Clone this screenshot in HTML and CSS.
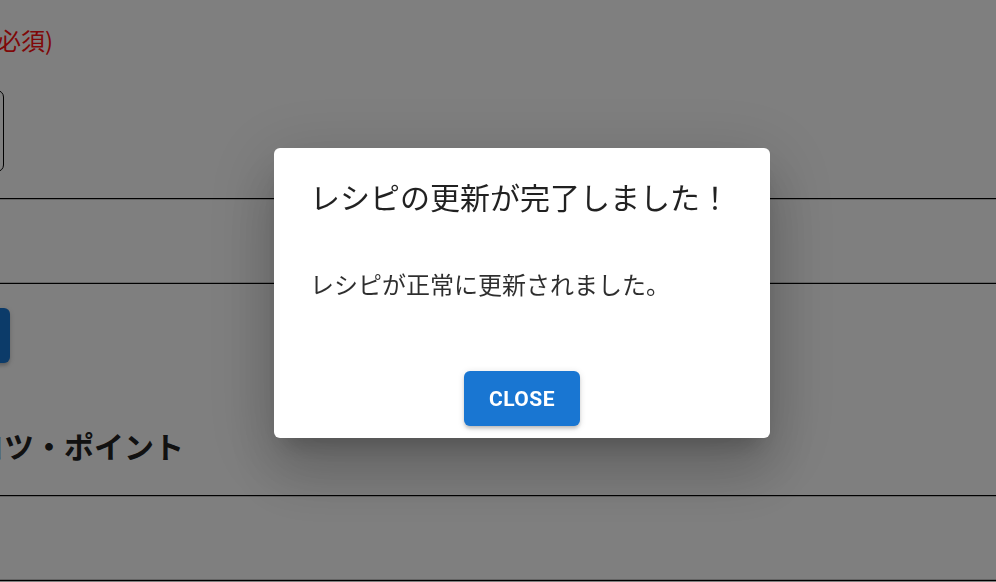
FILE: index.html
```html
<!DOCTYPE html>
<html lang="ja">
<head>
<meta charset="utf-8">
<title>レシピ編集</title>
<link rel="stylesheet" href="styles.css">
</head>
<body>
<div class="page">
  <div class="row label-row"><span class="label">レシピ名 (必須)</span></div>
  <div class="field"></div>
  <div class="divider"><div class="divider-inner"></div></div>
  <div class="blue-btn"></div>
  <div class="row heading-row"><h2 class="heading">コツ・ポイント</h2></div>
  <div class="divider"><div class="divider-inner"></div></div>
</div>

<div class="overlay">
  <div class="dialog" role="dialog">
    <h2 class="dialog-title">レシピの更新が完了しました！</h2>
    <div class="dialog-content">
      <p class="dialog-text">レシピが正常に更新されました。</p>
    </div>
    <div class="dialog-actions">
      <button class="close-btn" type="button">CLOSE</button>
    </div>
  </div>
</div>
</body>
</html>
```

FILE: styles.css
```css
html, body {
  margin: 0;
  padding: 0;
  background: #ffffff;
  overflow: hidden;
  height: 100%;
}

body {
  font-family: "Noto Sans CJK JP", "Noto Sans", sans-serif;
}

.page {
  margin-left: -300px;
  width: calc(100% + 300px);
  padding-top: 22px;
  box-sizing: border-box;
}

.row {
  display: flex;
  justify-content: flex-end;
  white-space: nowrap;
}

.label-row {
  width: 353px;
  height: 36px;
}

.label {
  font-size: 24px;
  line-height: 36px;
  color: #ff1010;
}

.field {
  margin-top: 32px;
  width: 304px;
  height: 82px;
  box-sizing: border-box;
  border: 1px solid #000;
  border-radius: 7px;
}

.divider {
  margin-top: 26px;
  height: 86px;
  box-sizing: border-box;
  border-top: 1px solid #000;
  border-bottom: 1px solid #000;
}

.divider-inner {
  height: 100%;
  box-sizing: border-box;
  border-top: 1px solid #c8c8c8;
  border-bottom: 1px solid #c8c8c8;
}

.blue-btn {
  margin-top: 24px;
  width: 310px;
  height: 55px;
  background: #1976d2;
  border-radius: 6px;
  box-shadow: 0 3px 1.5px -3px rgba(0,0,0,0.2), 0 3px 3px 0 rgba(0,0,0,0.14), 0 1.5px 7.5px 0 rgba(0,0,0,0.12);
}

.heading-row {
  margin-top: 61px;
  width: 484px;
  height: 42px;
}

.heading {
  margin: 0;
  font-size: 30px;
  line-height: 42px;
  font-weight: 700;
  color: #222;
}

.heading-row + .divider {
  margin-top: 29px;
}

.overlay {
  position: fixed;
  inset: 0;
  background: rgba(0, 0, 0, 0.5);
  display: flex;
  align-items: center;
  justify-content: center;
  padding: 4px 0 0 48px;
  box-sizing: border-box;
}

.dialog {
  width: 496px;
  height: 290px;
  background: #fff;
  border-radius: 6px;
  box-shadow: 0 16px 22px -10px rgba(0,0,0,0.2), 0 36px 57px 4px rgba(0,0,0,0.14), 0 14px 69px 12px rgba(0,0,0,0.12);
  display: flex;
  flex-direction: column;
  box-sizing: border-box;
}

.dialog-title {
  margin: 0;
  padding: 24px 36px 0;
  font-size: 30px;
  line-height: 48px;
  font-weight: 400;
  color: rgba(0, 0, 0, 0.87);
  white-space: nowrap;
}

.dialog-content {
  padding: 46px 36px 57px;
}

.dialog-text {
  margin: 0;
  font-size: 24px;
  line-height: 36px;
  color: rgba(0, 0, 0, 0.82);
  white-space: nowrap;
}

.dialog-actions {
  display: flex;
  justify-content: center;
  padding: 12px;
}

.close-btn {
  width: 116px;
  height: 55px;
  border: none;
  border-radius: 6px;
  background: #1976d2;
  color: #fff;
  font-family: Roboto, "Liberation Sans", sans-serif;
  font-weight: 700;
  font-size: 21px;
  letter-spacing: 0.5px;
  text-transform: uppercase;
  box-shadow: 0 3px 1.5px -3px rgba(0,0,0,0.2), 0 3px 3px 0 rgba(0,0,0,0.14), 0 1.5px 7.5px 0 rgba(0,0,0,0.12);
  cursor: pointer;
}
```
